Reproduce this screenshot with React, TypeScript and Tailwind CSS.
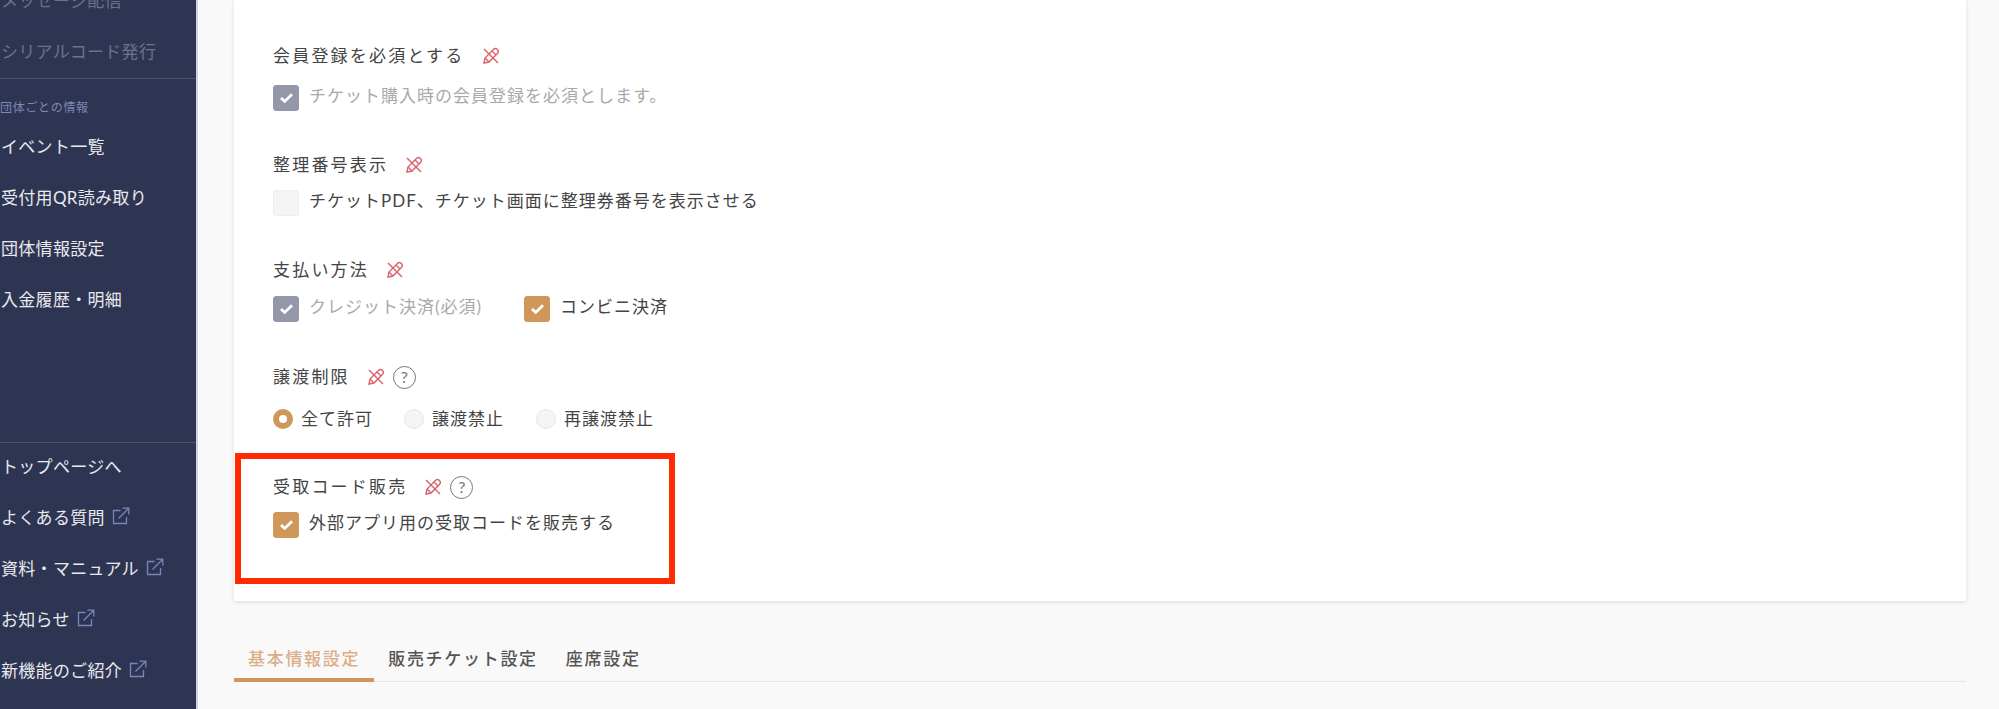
const font = "font-['Lato','Noto_Sans_CJK_JP',sans-serif]";

function Pencil() {
  return (
    <svg width="18" height="18" viewBox="0 0 18 18" fill="none" stroke="#d9636a" strokeWidth="1.4" className="shrink-0">
      <path d="M2 16l1-5 8.4-8.4c1.1-1.1 2.9-1.1 4 0s1.100 2.900 0 4L7 15z" />
      <path d="M10 4l4 4M3 11l4 4" />
      <path d="M2 2l14 14" />
    </svg>
  );
}

function Help() {
  return (
    <span className="ml-2 flex h-[23px] w-[23px] shrink-0 items-center justify-center rounded-full border border-[#777] text-[16px] leading-none text-[#777]">
      ?
    </span>
  );
}

function External() {
  return (
    <svg width="18" height="18" viewBox="0 0 18 18" fill="none" stroke="#7b86b8" strokeWidth="1.3" className="ml-[7px] -mt-[3px] shrink-0">
      <path d="M8.500 3.500H1.500v13h13V10" />
      <path d="M6.500 11.500L16.500 1.500M10.500 1.200h6.300V7.500" />
    </svg>
  );
}

function Check({ tone }: { tone: "gray" | "orange" | "off" }) {
  const box =
    tone === "gray"
      ? "bg-[#9497aa] border-[#9497aa]"
      : tone === "orange"
        ? "bg-[#cf975a] border-[#cf975a]"
        : "bg-[#f6f4f4] border-[#eeeeee]";
  return (
    <span className={`flex h-[26px] w-[26px] shrink-0 items-center justify-center rounded-[3px] border ${box}`}>
      {tone !== "off" && (
        <svg width="15" height="12" viewBox="0 0 15 12" fill="none" stroke="#fff" strokeWidth="2.8">
          <path d="M2 6l3.700 3.400L13 2.200" />
        </svg>
      )}
    </span>
  );
}

function Radio({ on, label, className }: { on?: boolean; label: string; className?: string }) {
  return (
    <div className={`flex h-[26px] items-center ${className ?? ""}`}>
      {on ? (
        <span className="flex h-5 w-5 items-center justify-center rounded-full bg-[#cf975a]">
          <span className="h-2 w-2 rounded-full bg-white" />
        </span>
      ) : (
        <span className="h-5 w-5 rounded-full border border-[#e8e6e6] bg-[#f6f4f4]" />
      )}
      <span className="ml-2 tracking-[1px] text-[#444]">{label}</span>
    </div>
  );
}

function Label({ text, help }: { text: string; help?: boolean }) {
  return (
    <div className="flex h-6 items-center">
      <span className="mr-[17px] tracking-[2.2px] text-[#444]">{text}</span>
      <Pencil />
      {help && <Help />}
    </div>
  );
}

function NavItem({ text, dim, ext, className }: { text: string; dim?: boolean; ext?: boolean; className?: string }) {
  return (
    <div
      className={`flex h-[51px] shrink-0 items-center whitespace-nowrap pl-px tracking-[0.3px] ${dim ? "text-[#6d7288]" : "text-[#e9e9ee]"} ${className ?? ""}`}
    >
      {text}
      {ext && <External />}
    </div>
  );
}

export default function App() {
  return (
    <div className={`${font} flex h-[709px] w-[1999px] overflow-hidden bg-[#f9f9f9] text-[17px]`}>
      {/* Sidebar */}
      <aside className="flex h-full w-[198px] shrink-0 flex-col border-r-2 border-[#cdd1de] bg-[#2e3552] pb-[13px]">
        <NavItem text="メッセージ配信" dim className="-mt-[25px]" />
        <NavItem text="シリアルコード発行" dim />
        <div className="mt-px h-px bg-[#4b516b]" />
        <div className="mb-[5px] whitespace-nowrap pt-[21px] text-[12px] leading-4 tracking-[0.7px] text-[#7f88b6]">
          団体ごとの情報
        </div>
        <NavItem text="イベント一覧" />
        <NavItem text="受付用QR読み取り" />
        <NavItem text="団体情報設定" />
        <NavItem text="入金履歴・明細" />
        <div className="mt-auto h-px bg-[#4b516b]" />
        <NavItem text="トップページへ" className="-mt-[2px]" />
        <NavItem text="よくある質問" ext />
        <NavItem text="資料・マニュアル" ext />
        <NavItem text="お知らせ" ext />
        <NavItem text="新機能のご紹介" ext />
      </aside>

      {/* Main */}
      <main className="ml-9 mr-[33px] min-w-0 flex-1">
        <section className="relative h-[601px] bg-white pl-[39px] pt-[44px] shadow-[0_1px_4px_rgba(0,0,0,0.12)]">
          <Label text="会員登録を必須とする" />
          <div className="mt-[17px] flex h-[26px] items-center">
            <Check tone="gray" />
            <span className="ml-2.5 pb-[5px] tracking-[1px] text-[#a9a9a9]">チケット購入時の会員登録を必須とします。</span>
          </div>

          <div className="mt-[42px]">
            <Label text="整理番号表示" />
          </div>
          <div className="mt-[13px] flex h-[26px] items-center">
            <Check tone="off" />
            <span className="ml-2.5 pb-[5px] tracking-[1px] text-[#444]">チケットPDF、チケット画面に整理券番号を表示させる</span>
          </div>

          <div className="mt-[42px]">
            <Label text="支払い方法" />
          </div>
          <div className="mt-[14px] flex h-[26px] items-center">
            <Check tone="gray" />
            <span className="ml-2.5 w-[215px] pb-[5px] tracking-[1px] text-[#a9a9a9]">クレジット決済(必須)</span>
            <Check tone="orange" />
            <span className="ml-2.5 pb-[5px] tracking-[1px] text-[#444]">コンビニ決済</span>
          </div>

          <div className="mt-[43px]">
            <Label text="譲渡制限" help />
          </div>
          <div className="mt-[17px] flex">
            <Radio on label="全て許可" />
            <Radio label="譲渡禁止" className="ml-[31px]" />
            <Radio label="再譲渡禁止" className="ml-[32px]" />
          </div>

          <div className="mt-[43px]">
            <Label text="受取コード販売" help />
          </div>
          <div className="mt-[13px] flex h-[26px] items-center">
            <Check tone="orange" />
            <span className="ml-2.5 pb-[5px] tracking-[1px] text-[#444]">外部アプリ用の受取コードを販売する</span>
          </div>

          {/* annotation frame */}
          <div className="absolute left-px top-[453px] h-[131px] w-[440px] border-[6px] border-[#ff2a00]" />
        </section>

        {/* Tabs */}
        <nav className="mt-[45px] flex h-9 border-b border-[#e4e4e4] font-medium tracking-[1.7px]">
          <div className="-mb-px h-9 border-b-4 border-[#d0965c] px-3.5 leading-[26px] text-[#dcae87]">基本情報設定</div>
          <div className="px-3.5 leading-[26px] text-[#555]">販売チケット設定</div>
          <div className="px-3.5 leading-[26px] text-[#555]">座席設定</div>
        </nav>
      </main>
    </div>
  );
}
